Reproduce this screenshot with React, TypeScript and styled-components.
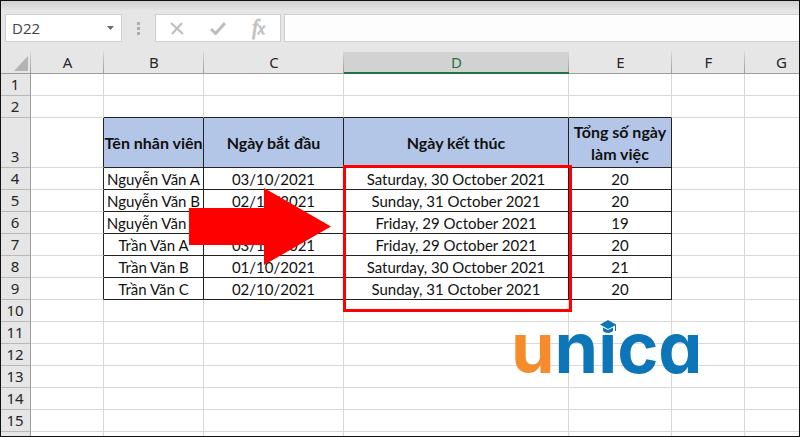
import React from "react";
import styled, { createGlobalStyle, css } from "styled-components";

const GlobalStyle = createGlobalStyle`
  *, *::before, *::after { box-sizing: border-box; }
  body { margin: 0; background: #fff; }
`;

const ui = `"Noto Sans", "Open Sans", sans-serif`;
const cellFont = `Lato, "Noto Sans", sans-serif`;

const Window = styled.main`
  height: 100vh;
  display: flex;
  flex-direction: column;
  overflow: hidden;
  border: 1px solid #111;
  background: #e6e6e6;
  font-family: ${ui};
`;

const FormulaBar = styled.header`
  flex: none;
  display: flex;
  align-items: stretch;
  height: 51px;
  padding: 13px 0 10px 4px;
  background: linear-gradient(#d2d0d2, #e6e6e6 10px);
`;

const NameBox = styled.div`
  display: flex;
  width: 117px;
  background: #fff;
  border: 1px solid #cfcfcf;
`;

const NameInput = styled.input`
  flex: 1;
  min-width: 0;
  border: 0;
  padding: 0 0 1px 6px;
  background: transparent;
  color: #444;
  font: 15px "Open Sans", sans-serif;
  outline: none;
`;

const BarButton = styled.button<{ $width: number }>`
  display: flex;
  align-items: center;
  justify-content: center;
  width: ${(p) => p.$width}px;
  border: 0;
  padding: 0;
  background: transparent;
  color: #b8b8b8;
`;

const Grip = styled.div`
  display: flex;
  flex-direction: column;
  justify-content: center;
  align-items: center;
  gap: 2px;
  width: 33px;
`;

const GripDot = styled.span`
  width: 3px;
  height: 3px;
  background: #adadad;
`;

const Actions = styled.div`
  display: flex;
  width: 126px;
  background: #fff;
  border: 1px solid #cfcfcf;
`;

const FunctionMark = styled.span`
  font: italic 20px/20px "Liberation Serif", serif;
  -webkit-text-stroke: 1px #c4c4c4;
`;

const FunctionArgument = styled.span`
  font-size: 16px;
`;

const FormulaInput = styled.input`
  flex: 1;
  min-width: 0;
  margin-left: 3px;
  border: 1px solid #cfcfcf;
  border-right: 0;
  background: #fdfdfd;
  outline: none;
`;

const Sheet = styled.section`
  position: relative;
  flex: 1;
  overflow: hidden;
  background: #fff;
`;

const Grid = styled.table`
  width: 100%;
  min-width: 817px;
  table-layout: fixed;
  border-collapse: separate;
  border-spacing: 0;
`;

const Col = styled.col<{ $width?: number }>`
  width: ${(p) => (p.$width ? `${p.$width}px` : "auto")};
`;

const ColumnHead = styled.th<{ $active?: boolean }>`
  height: 22px;
  padding: 0;
  border-bottom: 1px solid #9c9c9c;
  background: linear-gradient(#d6d6d6, #9c9c9c) right / 1px 100% no-repeat #e6e6e6;
  color: #262626;
  font: 15px/20px ${ui};
  vertical-align: top;
  ${(p) =>
    p.$active &&
    css`
      border-bottom: 2px solid #217346;
      background-color: #d2d2d2;
      color: #217346;
    `}
`;

const Corner = styled(ColumnHead)`
  text-align: right;
`;

const CornerMark = styled.svg`
  display: block;
  margin: 4px 3px 0 auto;
`;

const RowHead = styled.th<{ $tall?: boolean }>`
  height: ${(p) => (p.$tall ? 50 : 22)}px;
  padding: 0 1px 1px 0;
  border-right: 1px solid #9c9c9c;
  border-bottom: 1px solid #b8b8b8;
  background: #e6e6e6;
  color: #262626;
  font: 15px/20px ${ui};
  vertical-align: bottom;
`;

type Edge = { $right?: boolean; $bottom?: boolean };

const Cell = styled.td<Edge>`
  padding: 0;
  border-right: 1px solid ${(p) => (p.$right ? "#222" : "#d9d9d9")};
  border-bottom: 1px solid ${(p) => (p.$bottom ? "#222" : "#d9d9d9")};
  color: #111;
  font: 15px/20px ${cellFont};
  text-align: center;
  white-space: nowrap;
`;

const TitleCell = styled(Cell)`
  background: #b4c6e7;
  font-size: 16px;
  font-weight: 700;
  line-height: 22px;
  white-space: pre-line;
`;

const Highlight = styled.div`
  position: absolute;
  left: 342px;
  top: 113px;
  width: 229px;
  height: 147px;
  border: 3px solid #fe0000;
  pointer-events: none;
`;

const Arrow = styled.svg`
  position: absolute;
  left: 188px;
  top: 136px;
  pointer-events: none;
`;

const Logo = styled.div`
  position: absolute;
  left: 510px;
  top: 256px;
  color: #0c76b8;
  font: 700 70px/80px Inter, sans-serif;
  font-feature-settings: "cv11";
`;

const LogoAccent = styled.span`
  color: #f68b2c;
`;

const LogoStem = styled.span`
  position: relative;
`;

const Cap = styled.svg`
  position: absolute;
  left: 50%;
  top: 15px;
  margin-left: -8px;
`;

const columns = ["A", "B", "C", "D", "E", "F", "G"];
const widths = [30, 73, 100, 140, 225, 103, 73, 73];

const data: Record<number, string[]> = {
  3: ["Tên nhân viên", "Ngày bắt đầu", "Ngày kết thúc", "Tổng số ngày\nlàm việc"],
  4: ["Nguyễn Văn A", "03/10/2021", "Saturday, 30 October 2021", "20"],
  5: ["Nguyễn Văn B", "02/10/2021", "Sunday, 31 October 2021", "20"],
  6: ["Nguyễn Văn C", "01/10/2021", "Friday, 29 October 2021", "19"],
  7: ["Trần Văn A", "03/10/2021", "Friday, 29 October 2021", "20"],
  8: ["Trần Văn B", "01/10/2021", "Saturday, 30 October 2021", "21"],
  9: ["Trần Văn C", "02/10/2021", "Sunday, 31 October 2021", "20"],
};

const rows = Array.from({ length: 15 }, (_, i) => i + 1);

function SheetRow({ row }: { row?: number }) {
  const values = row ? data[row] : undefined;
  return (
    <tr>
      <RowHead scope="row" $tall={row === 3}>
        {row}
      </RowHead>
      {columns.map((name, i) => {
        const inside = i >= 1 && i <= 4;
        const Part = row === 3 && inside ? TitleCell : Cell;
        return (
          <Part
            key={name}
            $right={!!values && i <= 4}
            $bottom={inside && !!row && row >= 2 && row <= 9}
          >
            {values && inside ? values[i - 1] : null}
          </Part>
        );
      })}
      <Cell />
    </tr>
  );
}

export default function App() {
  return (
    <>
      <GlobalStyle />
      <Window>
        <FormulaBar>
          <NameBox>
            <NameInput aria-label="Name box" defaultValue="D22" />
            <BarButton $width={22} aria-label="Open name list">
              <svg width="7" height="4" viewBox="0 0 7 4">
                <path d="M0 0h7L3.500 4z" fill="#6b6b6b" />
              </svg>
            </BarButton>
          </NameBox>
          <Grip>
            <GripDot />
            <GripDot />
            <GripDot />
          </Grip>
          <Actions>
            <BarButton $width={41} aria-label="Cancel">
              <svg width="14" height="13" viewBox="0 0 14 13">
                <path d="M1 1l12 11M12 1L2 12" stroke="#bdbdbd" strokeWidth="2" fill="none" />
              </svg>
            </BarButton>
            <BarButton $width={41} aria-label="Enter">
              <svg width="16" height="13" viewBox="0 0 16 13">
                <path d="M1 7l4.500 4.500L15 1" stroke="#bdbdbd" strokeWidth="3" fill="none" />
              </svg>
            </BarButton>
            <BarButton $width={41} aria-label="Insert function">
              <FunctionMark>
                f<FunctionArgument>x</FunctionArgument>
              </FunctionMark>
            </BarButton>
          </Actions>
          <FormulaInput aria-label="Formula" />
        </FormulaBar>
        <Sheet>
          <Grid>
            <colgroup>
              {widths.map((w, i) => (
                <Col key={i} $width={w} />
              ))}
              <Col />
            </colgroup>
            <thead>
              <tr>
                <Corner aria-label="Select all">
                  <CornerMark width="14" height="15" viewBox="0 0 14 15">
                    <path d="M14 0v15H0z" fill="#b4b4b4" />
                  </CornerMark>
                </Corner>
                {columns.map((name) => (
                  <ColumnHead key={name} scope="col" $active={name === "D"}>
                    {name}
                  </ColumnHead>
                ))}
                <ColumnHead />
              </tr>
            </thead>
            <tbody>
              {rows.map((row) => (
                <SheetRow key={row} row={row} />
              ))}
              <SheetRow />
            </tbody>
          </Grid>
          <Highlight />
          <Arrow width="142" height="77" viewBox="0 0 142 77">
            <path d="M0 20h75V0l67 38.500L75 77V57H0z" fill="#fe0000" />
          </Arrow>
          <Logo role="img" aria-label="unica">
            <LogoAccent>u</LogoAccent>n
            <LogoStem>
              ı
              <Cap width="16" height="13" viewBox="0 0 16 13">
                <path d="M0 4.500L8 0l8 4.500V11h-1V5.500L8 9zM3 7.500L8 10l5-2.500V11c-2 2.500-8 2.500-10 0z" fill="#0c76b8" />
              </Cap>
            </LogoStem>
            ca
          </Logo>
        </Sheet>
      </Window>
    </>
  );
}
